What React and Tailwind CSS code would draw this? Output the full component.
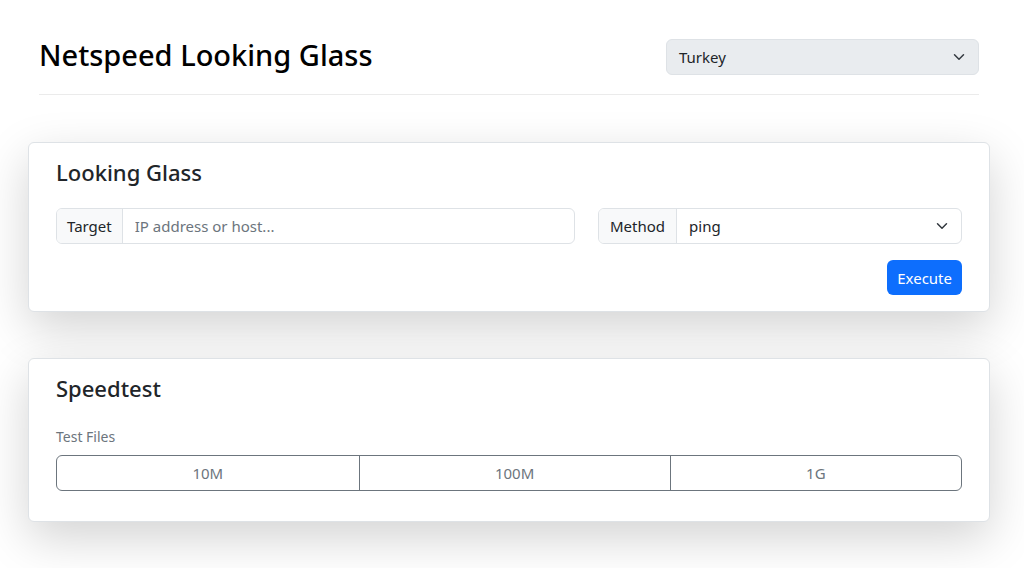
import { useState } from "react";

const Chevron = () => (
    <svg width="16" height="12" viewBox="0 0 16 16" fill="none" className="shrink-0">
        <path d="m2 5 6 6 6-6" stroke="#343a40" strokeWidth="2" strokeLinecap="round" strokeLinejoin="round" />
    </svg>
);

function App() {
    const [target, setTarget] = useState("");

    return (
        <div className="min-h-[568px] w-full bg-white text-[#212529]" style={{ fontFamily: '"Noto Sans", "Open Sans", sans-serif' }}>
            <div className="ml-[28px] w-[962px]">
                {/* Header */}
                <header className="mx-[11px] pt-[39px] pb-[19px] border-b border-[#ebebeb] flex items-center justify-between">
                    <h1 className="text-[29px] font-medium leading-[1.2] text-black -mt-[3px]">Netspeed Looking Glass</h1>
                    <div className="w-[313px] h-[36px] bg-[#e9ecef] border border-[#dee2e6] rounded-md flex items-center justify-between pl-[12px] pr-[11px]">
                        <span className="text-[15px]">Turkey</span>
                        <Chevron />
                    </div>
                </header>

                {/* Looking Glass */}
                <section className="mt-[47px] bg-white border border-[#dee2e6] rounded-md shadow-[0_1rem_3rem_rgba(0,0,0,0.175)] px-[27px] pt-[16px] pb-[16px]">
                    <h4 className="text-[22px] font-medium leading-[1.2] mb-[23px]">Looking Glass</h4>
                    <div className="flex gap-[23px]">
                        <div className="w-[519px] h-[36px] flex border border-[#dee2e6] rounded-md overflow-hidden">
                            <span className="bg-[#f8f9fa] border-r border-[#dee2e6] px-[10px] flex items-center text-[15px]">Target</span>
                            <input
                                value={target}
                                onChange={(e) => setTarget(e.target.value)}
                                placeholder="IP address or host..."
                                className="flex-1 px-[12px] text-[15px] outline-none placeholder-[#6c757d]"
                            />
                        </div>
                        <div className="w-[364px] h-[36px] flex border border-[#dee2e6] rounded-md overflow-hidden">
                            <span className="bg-[#f8f9fa] border-r border-[#dee2e6] px-[11px] flex items-center text-[15px]">Method</span>
                            <div className="flex-1 flex items-center justify-between pl-[12px] pr-[11px]">
                                <span className="text-[15px]">ping</span>
                                <Chevron />
                            </div>
                        </div>
                    </div>
                    <div className="flex justify-end mt-[16px]">
                        <button className="h-[35px] px-[10px] bg-[#0d6efd] text-white text-[15px] rounded-md">Execute</button>
                    </div>
                </section>

                {/* Speedtest */}
                <section className="mt-[46px] bg-white border border-[#dee2e6] rounded-md shadow-[0_1rem_3rem_rgba(0,0,0,0.175)] px-[27px] pt-[16px] pb-[30px]">
                    <h4 className="text-[22px] font-medium leading-[1.2] mb-[24px]">Speedtest</h4>
                    <div className="text-[14px] text-[#6c757d] mb-[8px]">Test Files</div>
                    <div className="flex h-[36px] border border-[#6c757d] rounded-md overflow-hidden">
                        <button className="flex-auto px-[12px] text-[15px] text-[#6c757d]">10M</button>
                        <button className="flex-auto px-[12px] text-[15px] text-[#6c757d] border-l border-[#6c757d]">100M</button>
                        <button className="flex-auto px-[12px] text-[15px] text-[#6c757d] border-l border-[#6c757d]">1G</button>
                    </div>
                </section>
            </div>
        </div>
    );
}

export default App;
